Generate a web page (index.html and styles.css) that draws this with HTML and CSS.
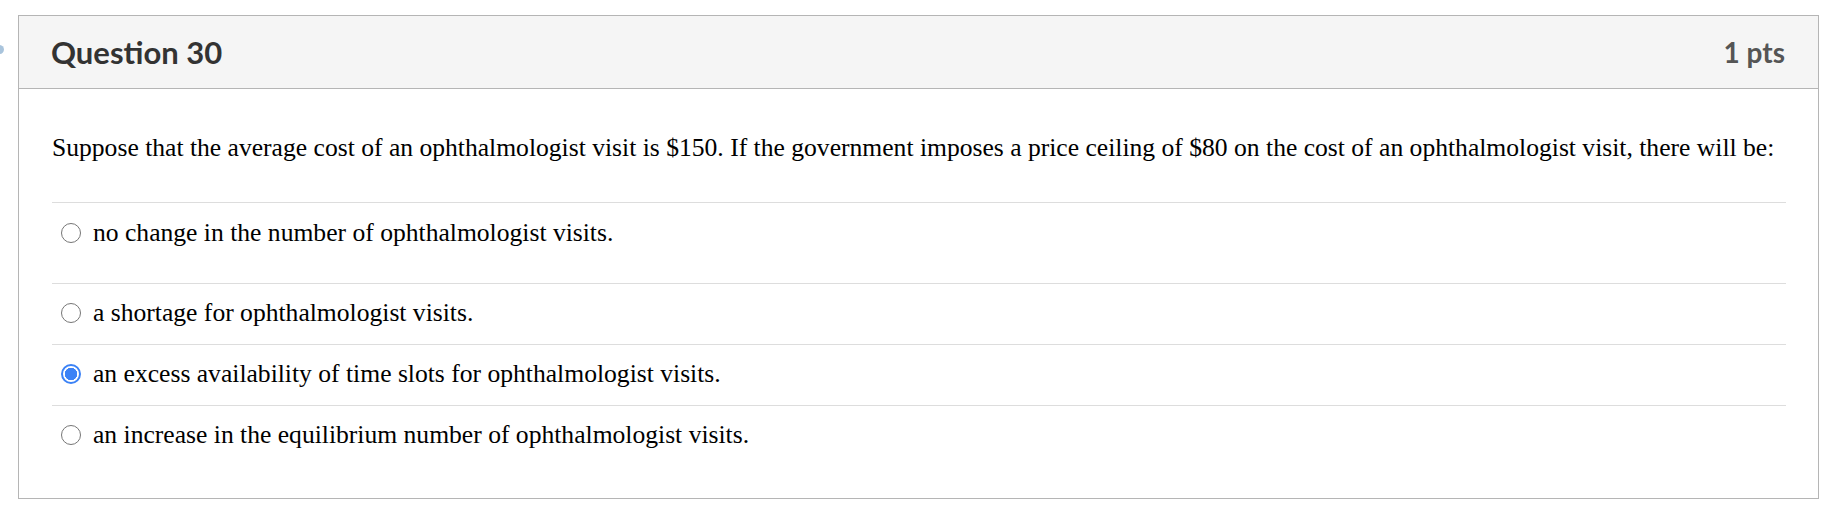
FILE: index.html
```html
<!DOCTYPE html>
<html>
<head>
<meta charset="utf-8">
<link rel="stylesheet" href="styles.css">
</head>
<body>
<div class="page">
  <span class="nav-dot"></span>
  <div class="question">
    <div class="q-header">
      <h2 class="q-title">Question 30</h2>
      <span class="q-points">1 pts</span>
    </div>
    <div class="q-body">
      <p class="q-text">Suppose that the average cost of an ophthalmologist visit is $150. If the government imposes a price ceiling of $80 on the cost of an ophthalmologist visit, there will be:</p>
      <div class="answers">
        <label class="answer answer-first"><span class="radio"></span><span class="answer-text">no change in the number of ophthalmologist visits.</span></label>
        <label class="answer"><span class="radio"></span><span class="answer-text">a shortage for ophthalmologist visits.</span></label>
        <label class="answer"><span class="radio radio-checked"></span><span class="answer-text">an excess availability of time slots for ophthalmologist visits.</span></label>
        <label class="answer"><span class="radio"></span><span class="answer-text">an increase in the equilibrium number of ophthalmologist visits.</span></label>
      </div>
    </div>
  </div>
</div>
</body>
</html>
```

FILE: styles.css
```css
html, body {
  margin: 0;
  padding: 0;
  background: #ffffff;
}

.page {
  position: relative;
  padding: 15px 19px 0 18px;
}

.nav-dot {
  position: absolute;
  left: -5px;
  top: 45px;
  width: 9px;
  height: 9px;
  border-radius: 50%;
  background: #a9c4dc;
}

.question {
  border: 1px solid #b5b5b5;
  background: #ffffff;
}

.q-header {
  display: flex;
  align-items: center;
  justify-content: space-between;
  height: 73px;
  box-sizing: border-box;
  padding: 0 33px 0 32px;
  background: #f5f5f5;
  border-bottom: 1px solid #b5b5b5;
}

.q-title {
  margin: 0;
  font-family: Lato, "Open Sans", sans-serif;
  font-weight: 700;
  font-size: 31px;
  color: #333333;
}

.q-points {
  font-family: Lato, "Open Sans", sans-serif;
  font-weight: 700;
  font-size: 28px;
  color: #555555;
}

.q-body {
  padding: 44px 32px 32px 33px;
  font-family: "Liberation Serif", "Times New Roman", serif;
  font-size: 25.6px;
  color: #000000;
}

.q-text {
  margin: 0 0 39px 0;
  line-height: 30px;
}

.answers {
  display: flex;
  flex-direction: column;
}

.answer {
  display: flex;
  align-items: center;
  gap: 12px;
  border-top: 1px solid #dddddd;
  padding: 17px 0 19px 9px;
  line-height: 24px;
}

.answer-first {
  padding-top: 18px;
  padding-bottom: 38px;
}

.radio {
  width: 20px;
  height: 20px;
  box-sizing: border-box;
  border: 1.5px solid #767676;
  border-radius: 50%;
  background: #ffffff;
  flex: none;
}

.radio-checked {
  border: 2px solid #3b82f6;
  background: radial-gradient(circle, #3b82f6 0 6px, #ffffff 6.5px);
}
```
